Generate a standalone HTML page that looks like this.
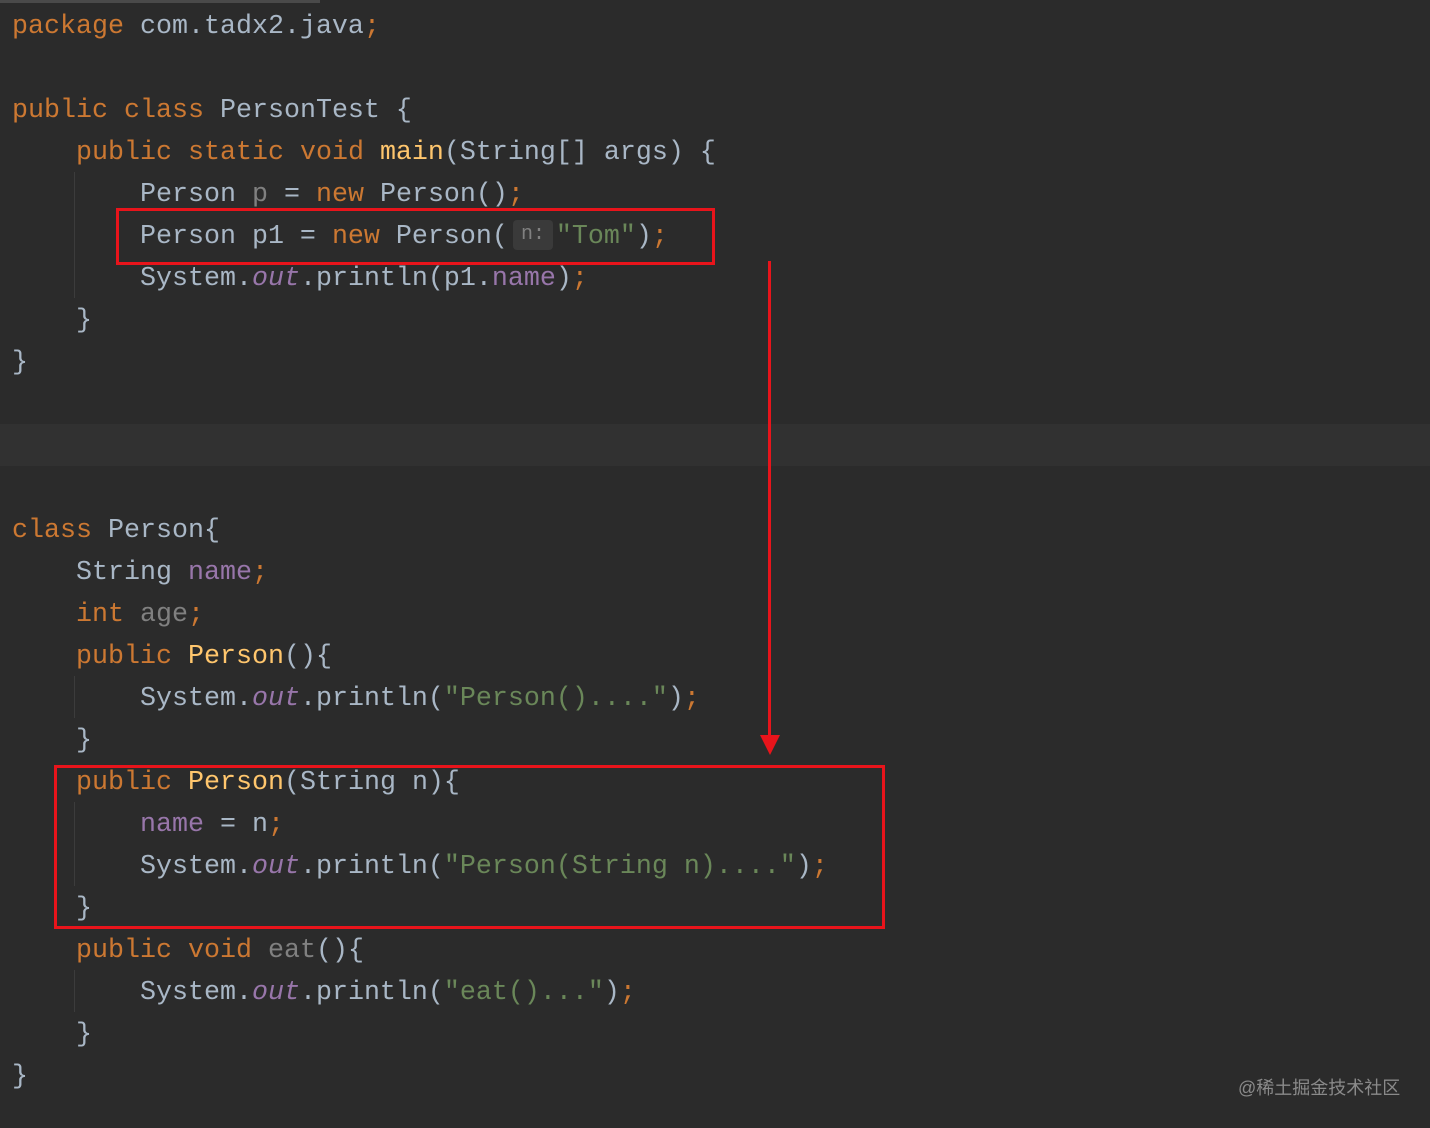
<!DOCTYPE html>
<html><head><meta charset="utf-8"><style>
body{margin:0;width:1430px;height:1128px;background:#2b2b2b;overflow:hidden;position:relative;font-family:"Liberation Mono",monospace;font-size:26.67px;color:#a9b7c6}
.l{position:absolute;left:12px;height:42px;line-height:42px;white-space:pre;margin-top:2px}
.k{color:#cc7832}.m{color:#ffc66d}.s{color:#6a8759}.p{color:#9876aa}.g{color:#808080}.i{font-style:italic;color:#9876aa}
.box{position:absolute;border:3px solid #e8141b;box-sizing:border-box}
.guide{position:absolute;width:1px;background:#3c3c3c}
</style></head><body>
<div style="position:absolute;left:0;top:0;width:320px;height:3px;background:#4a4a4a"></div>
<div style="position:absolute;left:0;top:424px;width:1430px;height:42px;background:#313131"></div>
<div class="guide" style="left:74px;top:172px;height:126px"></div>
<div class="guide" style="left:74px;top:676px;height:42px"></div>
<div class="guide" style="left:74px;top:802px;height:84px"></div>
<div class="guide" style="left:74px;top:970px;height:42px"></div>
<div class="l" style="top:4px"><span class="k">package</span> com.tadx2.java<span class="k">;</span></div>
<div class="l" style="top:88px"><span class="k">public class</span> PersonTest {</div>
<div class="l" style="top:130px">    <span class="k">public static void</span> <span class="m">main</span>(String[] args) {</div>
<div class="l" style="top:172px">        Person <span class="g">p</span> = <span class="k">new</span> Person()<span class="k">;</span></div>
<div style="position:absolute;left:513px;top:220px;width:40px;height:30px;background:#3a3a3a;border-radius:4px;color:#808080;font-size:20px;line-height:30px;text-align:center">n:</div>
<div class="l" style="top:214px">        Person p1 = <span class="k">new</span> Person(   <span class="s">"Tom"</span>)<span class="k">;</span></div>
<div class="l" style="top:256px">        System.<span class="i">out</span>.println(p1.<span class="p">name</span>)<span class="k">;</span></div>
<div class="l" style="top:298px">    }</div>
<div class="l" style="top:340px">}</div>
<div class="l" style="top:508px"><span class="k">class</span> Person{</div>
<div class="l" style="top:550px">    String <span class="p">name</span><span class="k">;</span></div>
<div class="l" style="top:592px">    <span class="k">int</span> <span class="g">age</span><span class="k">;</span></div>
<div class="l" style="top:634px">    <span class="k">public</span> <span class="m">Person</span>(){</div>
<div class="l" style="top:676px">        System.<span class="i">out</span>.println(<span class="s">"Person()...."</span>)<span class="k">;</span></div>
<div class="l" style="top:718px">    }</div>
<div class="l" style="top:760px">    <span class="k">public</span> <span class="m">Person</span>(String n){</div>
<div class="l" style="top:802px">        <span class="p">name</span> = n<span class="k">;</span></div>
<div class="l" style="top:844px">        System.<span class="i">out</span>.println(<span class="s">"Person(String n)...."</span>)<span class="k">;</span></div>
<div class="l" style="top:886px">    }</div>
<div class="l" style="top:928px">    <span class="k">public void</span> <span class="g">eat</span>(){</div>
<div class="l" style="top:970px">        System.<span class="i">out</span>.println(<span class="s">"eat()..."</span>)<span class="k">;</span></div>
<div class="l" style="top:1012px">    }</div>
<div class="l" style="top:1054px">}</div>
<div class="box" style="left:116px;top:208px;width:599px;height:57px"></div>
<div class="box" style="left:54px;top:765px;width:831px;height:164px"></div>
<div style="position:absolute;left:768px;top:261px;width:3px;height:478px;background:#e8141b"></div>
<div style="position:absolute;left:760px;top:735px;width:0;height:0;border-left:10px solid transparent;border-right:10px solid transparent;border-top:20px solid #e8141b"></div>
<div style="position:absolute;left:1238px;top:1074px;font-family:'Liberation Sans','Noto Sans CJK SC',sans-serif;font-size:18px;color:#8a8a8a">@稀土掘金技术社区</div>
</body></html>
